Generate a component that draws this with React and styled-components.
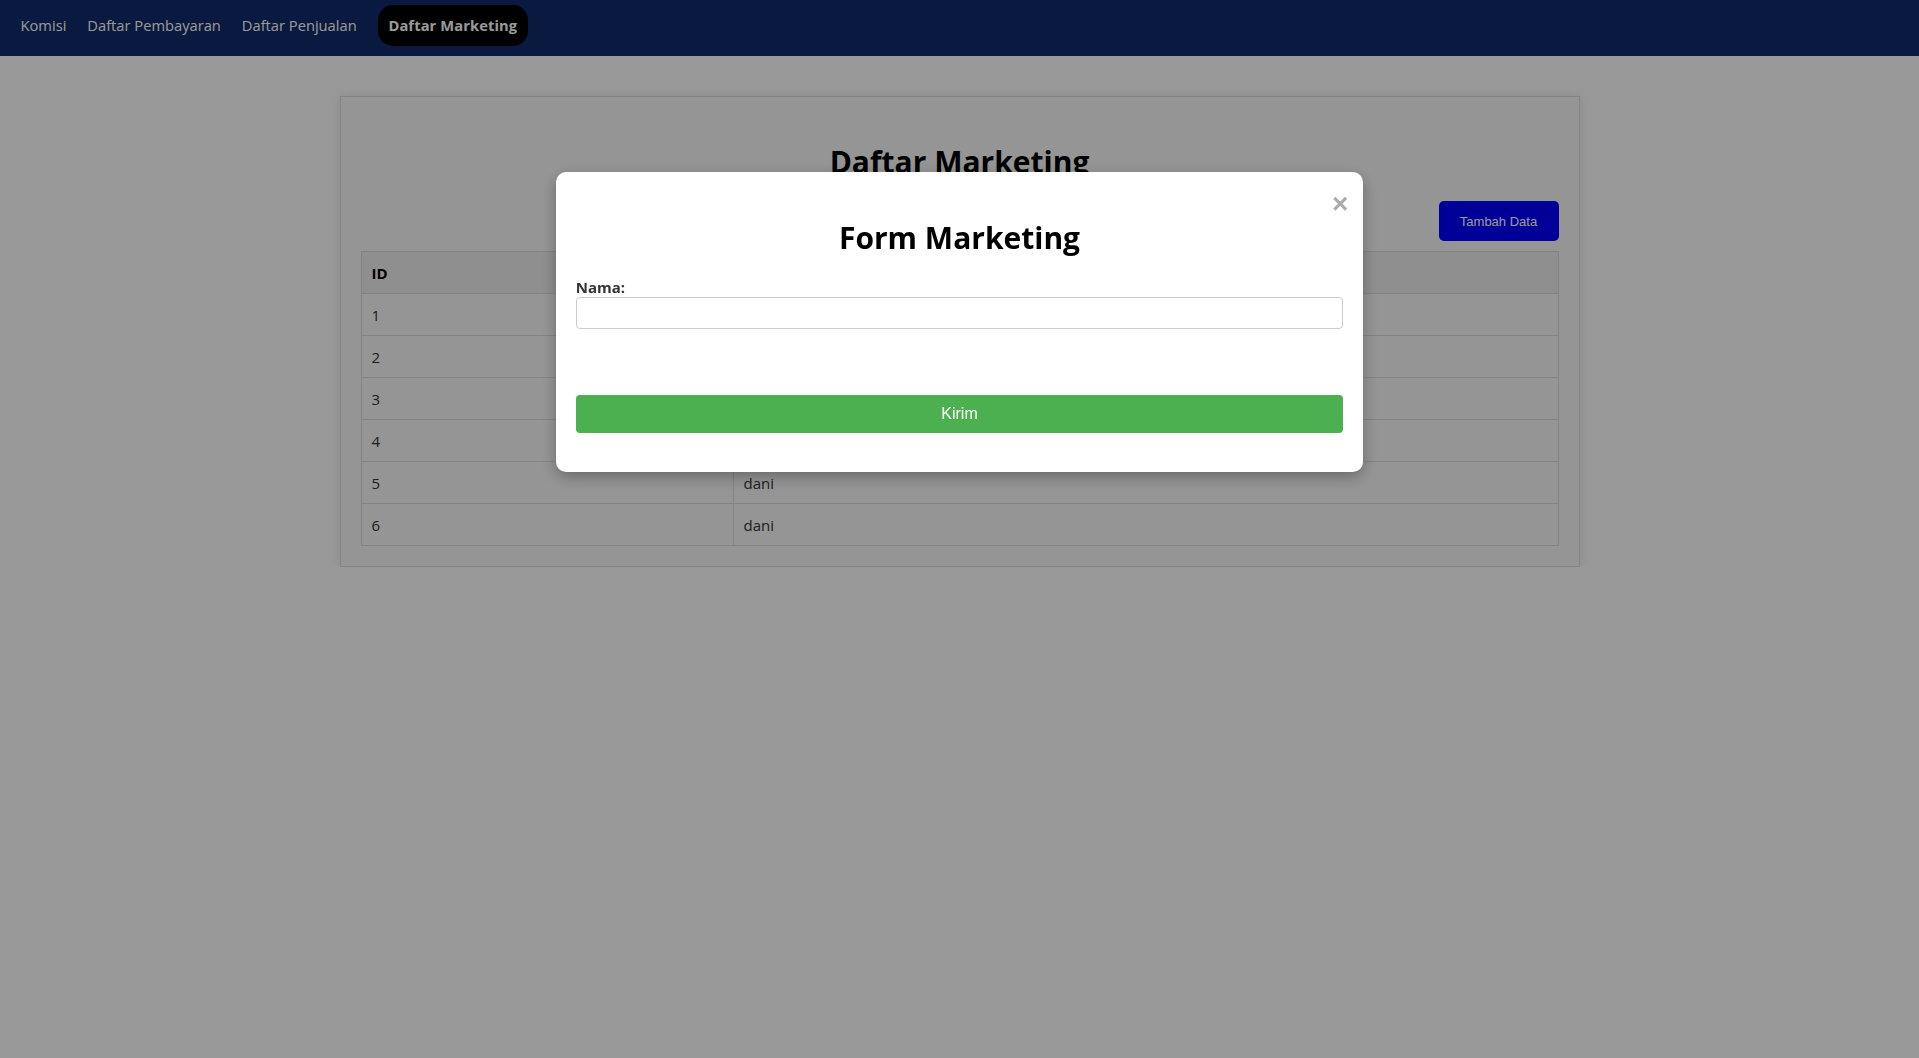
import React from "react";
import styled, { createGlobalStyle } from "styled-components";

const GlobalStyle = createGlobalStyle`
  html, body {
    margin: 0;
    padding: 0;
    background: #ffffff;
    font-family: "Open Sans", "Noto Sans", sans-serif;
    color: #333;
  }
  * { box-sizing: border-box; }
`;

const NavBar = styled.nav`
  height: 56px;
  background: #112b69;
  display: flex;
  align-items: flex-start;
  gap: 21px;
  padding: 5px 20px 0 20.5px;
`;

const NavLink = styled.a`
  display: block;
  padding: ${(p) => (p.$active ? "10px 10.75px" : "10px 0")};
  line-height: 21px;
  font-size: 14.7px;
  color: #ffffff;
  text-decoration: none;
  border-radius: 15px;
  white-space: nowrap;
  font-weight: ${(p) => (p.$active ? 700 : 400)};
  letter-spacing: ${(p) => (p.$active ? "0.1px" : "0")};
  background: ${(p) => (p.$active ? "#000000" : "transparent")};
`;

const Main = styled.main`
  padding-top: 40px;
`;

const Card = styled.section`
  width: 1240px;
  margin: 0 auto;
  padding: 20px;
  background: #f9f9f9;
  border: 1px solid #ddd;
  box-shadow: 0 0 10px rgba(0, 0, 0, 0.1);
`;

const PageTitle = styled.h1`
  margin: 22.5px 0 18.5px;
  text-align: center;
  font-size: 30px;
  line-height: 43px;
  font-weight: 700;
  color: #000;
`;

const Toolbar = styled.div`
  display: flex;
  justify-content: flex-end;
  margin-bottom: 10px;
`;

const AddButton = styled.button`
  width: 120px;
  height: 40px;
  border: none;
  border-radius: 5px;
  background: #0000ff;
  color: #ffffff;
  font-family: "Liberation Sans", Arial, sans-serif;
  font-size: 13px;
  cursor: pointer;
`;

const Table = styled.table`
  width: 100%;
  border-collapse: collapse;
  font-size: 15px;
`;

const Th = styled.th`
  border: 1px solid #ddd;
  padding: 11px 10px 9px;
  line-height: 21px;
  text-align: left;
  background: #eeeeee;
  color: #000;
  font-weight: 700;
  width: ${(p) => p.$w || "auto"};
`;

const Td = styled.td`
  border: 1px solid #ddd;
  padding: 11px 10px 9px;
  line-height: 21px;
  text-align: left;
  color: #333;
`;

const Overlay = styled.div`
  position: fixed;
  inset: 0;
  background: rgba(0, 0, 0, 0.4);
  display: flex;
  justify-content: center;
  align-items: flex-start;
  padding-top: 172px;
`;

const Modal = styled.div`
  position: relative;
  width: 40%;
  box-sizing: content-box;
  padding: 20px;
  background: #ffffff;
  border-radius: 10px;
  box-shadow: 0 5px 15px rgba(0, 0, 0, 0.3);
`;

const Close = styled.span`
  position: absolute;
  top: 18px;
  right: 15px;
  font-family: "Liberation Sans", Arial, sans-serif;
  font-size: 28px;
  font-weight: 700;
  line-height: 1;
  color: #aaaaaa;
  cursor: pointer;
`;

const ModalTitle = styled.h1`
  margin: 24px 0 18px;
  text-align: center;
  font-size: 30px;
  line-height: 43px;
  font-weight: 700;
  color: #000;
`;

const Label = styled.label`
  display: block;
  font-size: 15px;
  line-height: 20px;
  font-weight: 700;
  color: #333;
`;

const Input = styled.input`
  display: block;
  width: 100%;
  height: 32px;
  padding: 6px 8px;
  border: 1px solid #ccc;
  border-radius: 4px;
  font-size: 15px;
  font-family: inherit;
  outline: none;
`;

const SubmitButton = styled.button`
  display: block;
  width: 100%;
  height: 38px;
  margin: 66px 0 19px;
  border: none;
  border-radius: 4px;
  background: #4caf50;
  color: #ffffff;
  font-family: "Liberation Sans", Arial, sans-serif;
  font-size: 16px;
  cursor: pointer;
`;

const rows = [
  { id: 1, nama: "" },
  { id: 2, nama: "" },
  { id: 3, nama: "" },
  { id: 4, nama: "" },
  { id: 5, nama: "dani" },
  { id: 6, nama: "dani" },
];

export default function App() {
  return (
    <>
      <GlobalStyle />
      <NavBar>
        <NavLink href="#">Komisi</NavLink>
        <NavLink href="#">Daftar Pembayaran</NavLink>
        <NavLink href="#">Daftar Penjualan</NavLink>
        <NavLink href="#" $active>
          Daftar Marketing
        </NavLink>
      </NavBar>
      <Main>
        <Card>
          <PageTitle>Daftar Marketing</PageTitle>
          <Toolbar>
            <AddButton>Tambah Data</AddButton>
          </Toolbar>
          <Table>
            <thead>
              <tr>
                <Th $w="372px">ID</Th>
                <Th>Nama</Th>
              </tr>
            </thead>
            <tbody>
              {rows.map((r) => (
                <tr key={r.id}>
                  <Td>{r.id}</Td>
                  <Td>{r.nama}</Td>
                </tr>
              ))}
            </tbody>
          </Table>
        </Card>
      </Main>
      <Overlay>
        <Modal>
          <Close>×</Close>
          <ModalTitle>Form Marketing</ModalTitle>
          <form onSubmit={(e) => e.preventDefault()}>
            <Label htmlFor="nama">Nama:</Label>
            <Input id="nama" type="text" />
            <SubmitButton type="submit">Kirim</SubmitButton>
          </form>
        </Modal>
      </Overlay>
    </>
  );
}
